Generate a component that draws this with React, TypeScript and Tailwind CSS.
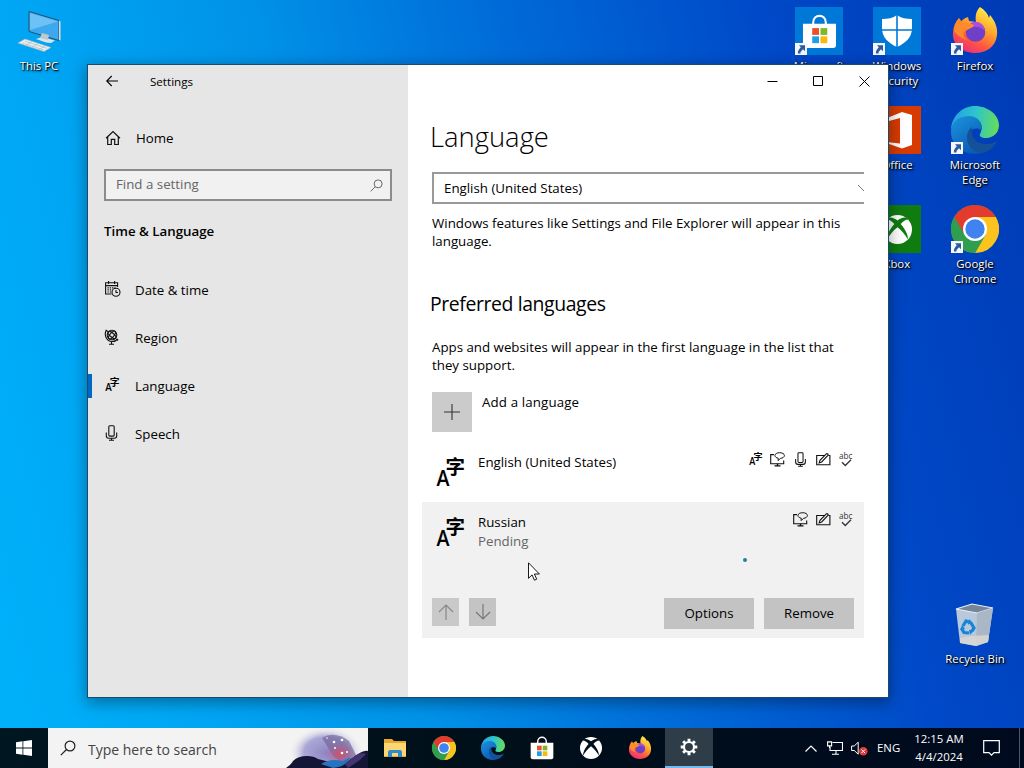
import React from "react";

type IconProps = { className?: string };

function LanguageGlyph({ className }: IconProps) {
  return (
    <svg viewBox="0 0 28 30" className={className} fill="currentColor" overflow="visible">
      <text x="0.5" y="28.5" fontSize="22" textLength="13" lengthAdjust="spacingAndGlyphs" fontFamily="Open Sans, sans-serif" fontWeight="600">
        A
      </text>
      <text x="9.5" y="17" fontSize="19.5" fontFamily="Noto Sans CJK SC, sans-serif" fontWeight="700">
        字
      </text>
    </svg>
  );
}

function DisplayIcon() {
  return (
    <svg viewBox="0 0 15 15" className="size-[15px]" fill="none" stroke="#111" strokeWidth="1.1">
      <path d="M4 2.6H.7v9.2h13V8.5" />
      <path d="M4.500 13.900h6M7.500 11.800v2" strokeWidth="1.4" />
      <path d="M8.2 8.600V6.200C6.200 5.800 4.900 4.700 4.900 3.500 4.900 1.900 7 .700 9.700.700s4.700 1.200 4.700 2.800-1.800 2.700-4 2.900z" strokeWidth="1" />
    </svg>
  );
}

function MicIcon({ className }: IconProps) {
  return (
    <svg viewBox="0 0 13 16" className={className} fill="none" stroke="#111" strokeWidth="1.1">
      <rect x="3.8" y=".7" width="5.4" height="10.4" rx="1" />
      <path d="M1.3 7.5v3.2c0 1.6 1 2.5 2.4 2.5h5.6c1.4 0 2.4-.9 2.4-2.5V7.5" />
      <path d="M6.5 13.2v2M4 15.3h5" />
    </svg>
  );
}

function PenIcon() {
  return (
    <svg viewBox="0 0 15 13" className="h-[13px] w-[15px]" fill="none" stroke="#111" strokeWidth="1.1">
      <path d="M9 2.500H.7v9.300h13.200V2.500h-1.500" />
      <path d="M3.2 9.900l.8-2.600L10.300.900c.9-.7 2.300.5 1.600 1.500L5.700 9z" />
    </svg>
  );
}

function SpellIcon() {
  return (
    <svg viewBox="0 0 14 16" className="h-4 w-3.5" fill="none" stroke="#333" overflow="visible">
      <text x="0" y="7.5" fontSize="8.5" textLength="13.5" lengthAdjust="spacingAndGlyphs" fill="#333" stroke="none" fontFamily="Open Sans, sans-serif">
        abc
      </text>
      <path d="M3 11.2l3.3 3.3 5.7-5.7" strokeWidth="1.3" />
    </svg>
  );
}

function HomeIcon() {
  return (
    <svg viewBox="0 0 16 16" className="size-4" fill="none" stroke="#111" strokeWidth="1.2">
      <path d="M1 8.3L8 1.5l7 6.8M2.7 7v7.5h3.6V9.3h3.4v5.2h3.6V7" />
    </svg>
  );
}

function CalendarIcon() {
  return (
    <svg viewBox="0 0 16 16" className="ml-px size-4" fill="none" stroke="#111" strokeWidth="1.1">
      <path d="M6.500 13H.6V1.800h12V6M.6 4.600h12M3.600 0v3M9.600 0v3" />
      <path d="M2.500 6.800h8M2.500 8.900h4M2.500 11h4" strokeDasharray="1.3 1" strokeWidth="1.2" />
      <circle cx="11" cy="11.300" r="4" />
      <path d="M11 9v2.500h2" />
    </svg>
  );
}

function GlobeIcon() {
  return (
    <svg viewBox="0 0 16 16" className="size-4" fill="none" stroke="#111" strokeWidth="1.1">
      <circle cx="8" cy="6" r="4.8" />
      <ellipse cx="8" cy="6" rx="4.8" ry="2" transform="rotate(40 8 6)" />
      <ellipse cx="8" cy="6" rx="2" ry="4.8" transform="rotate(40 8 6)" />
      <path d="M2.4.8C-.3 5.8 2.3 12.3 8 12.5c2.5 0 4.6-1 6-2.5M2.2 1.4l1.8 1M12.3 10l1.8 1.4M7.5 12.5v2.7M5 15.3h5" />
    </svg>
  );
}

function SearchIcon({ className }: IconProps) {
  return (
    <svg viewBox="0 0 16 16" className={className} fill="none" stroke="currentColor" strokeWidth="1.2">
      <circle cx="10" cy="6" r="4.9" />
      <path d="M6.5 9.5L.8 15.2" />
    </svg>
  );
}

function ChromeLogo({ className }: IconProps) {
  return (
    <svg viewBox="0 0 48 48" className={className}>
      <circle cx="24" cy="24" r="24" fill="#2f9e4f" />
      <path d="M24 24L3.2 12A24 24 0 0 1 44.8 12z" fill="#e33b2e" />
      <path d="M24 12h20.8A24 24 0 0 1 24 48l10.4-18z" fill="#fcc31e" />
      <path d="M3.2 12L13.6 30 24 24V12z" fill="#e33b2e" />
      <path d="M3.2 12L13.6 30 34.4 30 24 48A24 24 0 0 1 3.2 12z" fill="#2f9e4f" />
      <circle cx="24" cy="24" r="12" fill="#fff" />
      <circle cx="24" cy="24" r="9.7" fill="#3f82f0" />
    </svg>
  );
}

function EdgeLogo({ className }: IconProps) {
  return (
    <svg viewBox="0 0 48 48" className={className}>
      <defs>
        <linearGradient id="edgeTop" x1="0" y1="0.4" x2="1" y2="0.5">
          <stop offset="0" stopColor="#259fe0" />
          <stop offset=".5" stopColor="#2dc5cc" />
          <stop offset="1" stopColor="#68dc58" />
        </linearGradient>
        <linearGradient id="edgeSide" x1="0" y1="0" x2=".6" y2="1">
          <stop offset="0" stopColor="#1b95df" />
          <stop offset="1" stopColor="#0c5cb4" />
        </linearGradient>
      </defs>
      <path d="M0 23C1 10 11 0 24 0s24 9 24 19c0 8-6 13-13 13-5 0-7-2-6-4 3-4 1-13-8-13C11 15 2 19 0 23z" fill="url(#edgeTop)" />
      <path d="M0 24C1 15 9 10 18 10c8 0 14 6 13 14-8-4-14 0-14 7 0 8 6 14 14 16C14 51-1 40 0 24z" fill="url(#edgeSide)" />
      <path d="M21 21c-9 6-6 25 10 26 6-1 11-5 14-10 1-1 0-2-1-1-10 5-26 1-23-15z" fill="#155199" />
    </svg>
  );
}

function FirefoxLogo({ className }: IconProps) {
  return (
    <svg viewBox="0 0 48 48" className={className}>
      <defs>
        <linearGradient id="foxBody" x1=".8" y1=".05" x2=".3" y2="1">
          <stop offset="0" stopColor="#fff04c" />
          <stop offset=".4" stopColor="#ffa52b" />
          <stop offset=".7" stopColor="#ff5a3e" />
          <stop offset="1" stopColor="#ee2b7c" />
        </linearGradient>
      </defs>
      <path d="M29 0c5 3 8 7 9 11l1-3c5 6 8 13 7 20-1 11-10 18-22 18C11 46 1 37 2 26c0-6 2-11 6-15l1 5c3-4 5-5 8-6l1 4 7 1c-1-6 0-11 4-15z" fill="url(#foxBody)" />
      <circle cx="24.500" cy="25" r="9.800" fill="#6f3fc8" />
      <path d="M20 16c5-3 13 0 14 8-3-4-8-5-12-4z" fill="#a94ee0" />
      <path d="M3 24c1-7 4-11 5-13l3 4 10 2c3 1 2 3-1 4l-6 3c-3 2-1 7 2 9-6-1-10-6-13-9z" fill="#ff8a2d" />
    </svg>
  );
}

function StoreBag({ className }: IconProps) {
  return (
    <svg viewBox="0 0 36 36" className={className}>
      <path d="M11.500 12V9c0-9.500 13-9.500 13 0v3" fill="none" stroke="#fff" strokeWidth="2.200" />
      <path d="M1 10h34v22a3 3 0 0 1-3 3H4a3 3 0 0 1-3-3z" fill="#fff" />
      <path d="M10.500 14.500h7v7h-7z" fill="#e8512b" />
      <path d="M19 14.500h7v7h-7z" fill="#7db828" />
      <path d="M10.500 23h7v7h-7z" fill="#1ba0e8" />
      <path d="M19 23h7v7h-7z" fill="#f9b710" />
    </svg>
  );
}

function XboxBall({ className, gap }: IconProps & { gap: string }) {
  return (
    <svg viewBox="0 0 32 32" className={className}>
      <circle cx="16" cy="16" r="16" fill="#fff" />
      <path d="M6 3c4-1 7 1 10 3 3-2 6-4 10-3l2 2c-3 0-6 2-8.500 5C24 15 28 22 27.500 27c-3-5-7-10-11.500-13.500C11.500 17 7.500 22 4.500 27 4 22 8 15 12.500 10 10 7 7 5 4 5z" fill={gap} />
    </svg>
  );
}

function ThisPcIcon() {
  return (
    <svg viewBox="0 0 48 48" className="size-12">
      <path d="M14 4.500l30 9v20l-30-9z" fill="#3da8ee" stroke="#24506f" />
      <path d="M15 6l28 8.500L15 23z" fill="#6cc2f5" />
      <path d="M44 13.500l1.500 1v19l-1.500-.5z" fill="#d5dde0" />
      <path d="M21 32l6-2 13 3.500-4 2.500-5-.5z" fill="#dde4e8" />
      <path d="M27 26l7 2-1 5-8-2z" fill="#bcc9cf" />
      <path d="M3 36l7-4 26 8.500L29 44.500z" fill="#e9eef0" stroke="#a6b6be" strokeWidth=".6" />
      <path d="M7 36l22 7M10 34.300l22 7M10 39l7-4.500M16 41l7-4.500M23 43l7-4" stroke="#aebcc4" strokeWidth=".7" />
    </svg>
  );
}

function StoreTile() {
  return (
    <div className="flex size-12 items-center justify-center bg-[#0078d7]">
      <StoreBag className="size-[35px]" />
    </div>
  );
}

function SecurityTile() {
  return (
    <div className="flex size-12 items-center justify-center bg-[#0078d7]">
      <svg viewBox="0 0 32 34" className="h-[34px] w-8">
        <path d="M16 1c4 3 9 4 15 4v9c0 9-6 15-15 19C7 29 1 23 1 14V5c6 0 11-1 15-4z" fill="#fff" />
        <path d="M16 0v34M0 16h32" stroke="#0078d7" strokeWidth="1.600" />
      </svg>
    </div>
  );
}

function OfficeTile() {
  return (
    <div className="size-12 bg-[#d83b01]">
      <svg viewBox="0 0 48 48" className="size-12">
        <path d="M9 14l20-8 10 3v30l-10 3.500-20-7 18 2V12l-11 3v16l-7 3z" fill="#fff" />
      </svg>
    </div>
  );
}

function XboxTile() {
  return (
    <div className="flex size-12 items-center justify-center bg-[#107c10]">
      <XboxBall className="size-[29px]" gap="#107c10" />
    </div>
  );
}

function RecycleBinIcon() {
  return (
    <svg viewBox="0 0 48 48" className="size-12">
      <path d="M5 9l16-5 21 4-5 34-12 4-16-3z" fill="#c6d2df" opacity=".93" />
      <path d="M5 9l16-5 21 4-16 5z" fill="#75869a" stroke="#e6edf2" strokeWidth="1.200" />
      <path d="M26 13l16-5-5 34-12 4z" fill="#aab7c7" />
      <path d="M9 38l12-2 17-1-1 7-12 4-16-3z" fill="#dcd8d3" opacity=".8" />
      <g fill="none" stroke="#1685d8" strokeWidth="3.200">
        <path d="M12 26l3-5 4 1.500M20 23l3 5-2 3M18 33l-5-.5-2.500-4" />
      </g>
      <path d="M18 19l4 4-5 1.500zM23.500 30l-4.500 5-1-5zM9 30l2-5 3 4z" fill="#1685d8" />
    </svg>
  );
}

function ShortcutArrow() {
  return (
    <svg viewBox="0 0 12 12" className="absolute bottom-0 left-0 size-3">
      <path d="M0 0h12v12H0z" fill="#f4f6f8" />
      <path d="M4 2.200h6v6L8 6.300 5.500 9v1.500H3C2.500 8 4 6 5.800 4.200z" fill="#2c5aa0" />
    </svg>
  );
}

const desktopIcons = [
  { label: "This PC", icon: <ThisPcIcon />, place: "left-[1px] top-[7px]", shortcut: false },
  { label: "Microsoft Store", icon: <StoreTile />, place: "left-[781px] top-[7px]", shortcut: true },
  { label: "Windows Security", icon: <SecurityTile />, place: "left-[859px] top-[7px]", shortcut: true },
  { label: "Firefox", icon: <FirefoxLogo className="size-12" />, place: "left-[937px] top-[7px]", shortcut: true },
  { label: "Office", icon: <OfficeTile />, place: "left-[859px] top-[106px]", shortcut: true },
  { label: "Microsoft Edge", icon: <EdgeLogo className="size-12" />, place: "left-[937px] top-[106px]", shortcut: true },
  { label: "Xbox", icon: <XboxTile />, place: "left-[859px] top-[205px]", shortcut: true },
  { label: "Google Chrome", icon: <ChromeLogo className="size-12" />, place: "left-[937px] top-[205px]", shortcut: true },
  { label: "Recycle Bin", icon: <RecycleBinIcon />, place: "left-[937px] top-[600px]", shortcut: false },
];

function DesktopIcon({ label, icon, place, shortcut }: (typeof desktopIcons)[number]) {
  return (
    <div className={`absolute flex w-[76px] flex-col items-center ${place}`}>
      <div className="relative">
        {icon}
        {shortcut && <ShortcutArrow />}
      </div>
      <span className="mt-[3px] w-[66px] text-center text-[11.4px] leading-[15px] text-white [text-shadow:1px_1px_1px_#000,1px_1px_3px_#000]">
        {label}
      </span>
    </div>
  );
}

const navItems = [
  { label: "Date & time", icon: <CalendarIcon /> },
  { label: "Region", icon: <GlobeIcon /> },
  { label: "Language", icon: <LanguageGlyph className="mb-0.5 ml-px h-[15px] w-[14px]" />, active: true },
  { label: "Speech", icon: <MicIcon className="ml-px h-4 w-[13px]" /> },
];

function Sidebar() {
  return (
    <aside className="flex w-80 flex-col bg-[#e6e6e6]">
      <header className="flex h-8 items-center pl-[18px]">
        <svg viewBox="0 0 12 12" className="size-3" fill="none" stroke="#000" strokeWidth="1.100">
          <path d="M12 6H.7M5.700 1L.7 6l5 5" />
        </svg>
        <span className="ml-8 pt-0.5 text-[11.6px]">Settings</span>
      </header>
      <div className="mt-[17px] flex h-12 items-center pl-[17px]">
        <HomeIcon />
        <span className="ml-[15px] pt-0.5">Home</span>
      </div>
      <div className="mx-4 mt-[7px] flex h-8 items-center justify-between border-2 border-[#8b8b8b] bg-[#f1f1f1] pr-[7px] pl-2.5 text-[#666]">
        <span>Find a setting</span>
        <SearchIcon className="size-[13px]" />
      </div>
      <h2 className="mt-5 ml-4 leading-5 font-semibold">Time &amp; Language</h2>
      <nav className="mt-[25px]">
        {navItems.map((item) => (
          <div key={item.label} className="flex h-12 items-center">
            <span className={item.active ? "h-6 w-1 bg-[#0067c4]" : "h-6 w-1"} />
            <span className="ml-3 flex w-[31px] items-center pb-0.5">{item.icon}</span>
            <span className="pt-0.5">{item.label}</span>
          </div>
        ))}
      </nav>
    </aside>
  );
}

function CaptionButtons() {
  return (
    <div className="-mr-6 flex h-8 justify-end pr-px">
      {["M.5 5.500h10", "M.5.5h9v9H.5z", "M.5.5l10 10M10.500.5l-10 10"].map((d) => (
        <button key={d} className="flex w-[46px] items-center justify-center">
          <svg viewBox="0 0 11 11" className="size-[11px]" fill="none" stroke="#000">
            <path d={d} />
          </svg>
        </button>
      ))}
    </div>
  );
}

function Main() {
  return (
    <main className="flex w-[480px] flex-col bg-white px-6">
      <CaptionButtons />
      <h1 className="mt-5 -ml-0.5 text-[27.4px] leading-10 font-light">Language</h1>
      <div className="mt-[15px] flex h-8 items-center justify-between overflow-hidden border-2 border-r-0 border-[#999] pl-2.5">
        <span className="pt-0.5">English (United States)</span>
        <svg viewBox="0 0 6 8" className="h-2 w-1.5" fill="none" stroke="#777">
          <path d="M0 1l6 6" />
        </svg>
      </div>
      <p className="mt-2.5 leading-[18px]">
        Windows features like Settings and File Explorer will appear in this language.
      </p>
      <h2 className="mt-10 -ml-0.5 text-[19.4px] leading-7 tracking-[-0.02em]">Preferred languages</h2>
      <p className="mt-5 leading-[18px]">
        Apps and websites will appear in the first language in the list that they support.
      </p>
      <div className="mt-[18px] flex h-10 gap-2.5">
        <button className="flex size-10 items-center justify-center bg-[#cbcbcb]">
          <svg viewBox="0 0 16 16" className="size-4" stroke="#333" strokeWidth="1.100">
            <path d="M0 8h16M8 0v16" />
          </svg>
        </button>
        <span className="leading-5 tracking-[0.01em]">Add a language</span>
      </div>

      <div className="mt-2.5 flex h-[60px] pt-2.5 pr-[11px] pl-1">
        <LanguageGlyph className="mt-[5px] h-[30px] w-7" />
        <span className="ml-3.5 flex-1 leading-5">English (United States)</span>
        <div className="-mt-px flex h-4 items-center gap-2">
          <LanguageGlyph className="h-3.5 w-[13px]" />
          <DisplayIcon />
          <MicIcon className="h-[15px] w-[15px]" />
          <PenIcon />
          <SpellIcon />
        </div>
      </div>

      <div className="-ml-2.5 flex h-[136px] flex-col bg-[#f1f1f1] pr-2.5 pb-[9px] pl-2.5">
        <div className="flex pt-2.5 pr-px pl-1">
          <LanguageGlyph className="mt-[5px] h-[30px] w-7" />
          <div className="ml-3.5 flex-1">
            <p className="leading-5">Russian</p>
            <p className="leading-[18px] text-[#666]">Pending</p>
          </div>
          <div className="-mt-px flex h-4 items-center gap-2">
            <DisplayIcon />
            <PenIcon />
            <SpellIcon />
          </div>
        </div>
        <div className="mt-auto flex items-start">
          <button className="flex h-7 w-[27px] items-center justify-center bg-[#c9c9c9]">
            <svg viewBox="0 0 16 16" className="size-4" fill="none" stroke="#888" strokeWidth="1.200">
              <path d="M8 16V1M1 8l7-7 7 7" />
            </svg>
          </button>
          <button className="ml-2.5 flex h-7 w-[27px] items-center justify-center bg-[#c4c4c4]">
            <svg viewBox="0 0 16 16" className="size-4" fill="none" stroke="#777" strokeWidth="1.200">
              <path d="M8 0v15M1 8l7 7 7-7" />
            </svg>
          </button>
          <button className="ml-auto h-[31px] w-[90px] bg-[#c3c3c3] pt-px">Options</button>
          <button className="ml-2.5 h-[31px] w-[90px] bg-[#c3c3c3] pt-px">Remove</button>
        </div>
      </div>
    </main>
  );
}

function SearchArt() {
  return (
    <svg viewBox="0 0 82 40" className="h-10 w-[82px]">
      <defs>
        <radialGradient id="artGlow">
          <stop offset="0" stopColor="#8f86c4" />
          <stop offset=".6" stopColor="#aaa8d6" />
          <stop offset="1" stopColor="#f2f2f2" stopOpacity="0" />
        </radialGradient>
        <radialGradient id="artRed">
          <stop offset="0" stopColor="#d84e63" />
          <stop offset="1" stopColor="#9a6ba5" stopOpacity="0" />
        </radialGradient>
      </defs>
      <ellipse cx="40" cy="25" rx="37" ry="27" fill="url(#artGlow)" />
      <path d="M36 10q12-8 27 3l8 16q-15 11-25-3z" fill="#6a5d92" opacity=".6" />
      <ellipse cx="54" cy="26" rx="16" ry="13" fill="url(#artRed)" />
      <g fill="#fff">
        <circle cx="48" cy="14" r="1.300" />
        <circle cx="56" cy="12" r="1.300" />
        <circle cx="49" cy="20" r="1" />
        <circle cx="56" cy="25" r="1.300" />
        <circle cx="61" cy="24" r="1" />
        <circle cx="41" cy="10" r=".8" />
      </g>
      <path d="M0 40q5-3 7-7 5-5 14-5 7 0 11 3l12 3 18-1 10-7q7-4 10-3v17z" fill="#151536" />
      <path d="M35 36q9-6 22-3l8-4q-5 10-18 11z" fill="#2873bd" />
      <path d="M59 36l11-9q6-3 10-1l-6 6-12 8z" fill="#443572" />
    </svg>
  );
}

function ExplorerIcon() {
  return (
    <svg viewBox="0 0 22 18" className="h-[18px] w-[22px]">
      <path d="M0 0h8l2 2h12v16H0z" fill="#e7a82e" />
      <path d="M0 4h22v13H0z" fill="#fbd672" />
      <path d="M4 18v-5c0-1 1-2 2-2h10c1 0 2 1 2 2v5h-4v-4H8v4z" fill="#2f8bc9" />
    </svg>
  );
}

function GearIcon() {
  return (
    <svg viewBox="0 0 20 20" className="size-[18px]" fill="none" stroke="#fff">
      <circle cx="10" cy="10" r="5.600" strokeWidth="2.400" />
      <g strokeWidth="3.200">
        <path d="M10 .8v3.500M10 15.700v3.500M.8 10h3.500M15.700 10h3.500M3.500 3.500L6 6M14 14l2.500 2.500M3.500 16.500L6 14M14 6l2.500-2.500" />
      </g>
    </svg>
  );
}

const pinned = [
  { name: "explorer", icon: <ExplorerIcon /> },
  { name: "chrome", icon: <ChromeLogo className="size-6" /> },
  { name: "edge", icon: <EdgeLogo className="size-6" /> },
  { name: "store", icon: <StoreBag className="size-6" /> },
  { name: "xbox", icon: <XboxBall className="size-[22px]" gap="#000f1a" /> },
  { name: "firefox", icon: <FirefoxLogo className="size-6" /> },
];

function Taskbar() {
  return (
    <footer className="flex h-10 bg-linear-to-r from-[#001620] via-[#000f1a] to-[#000a1e] text-white">
      <button className="flex w-12 items-center justify-center">
        <svg viewBox="0 0 16 16" className="size-4" fill="#fff">
          <path d="M0 2.200L6.500 1.300v6.300H0zM7.300 1.200L16 0v7.600H7.300zM0 8.400h6.500v6.300L0 13.800zM7.300 8.400H16V16l-8.700-1.200z" />
        </svg>
      </button>
      <div className="flex w-80 items-center bg-[#f3f3f3] pl-3 text-[#444]">
        <SearchIcon className="size-4 text-[#222]" />
        <span className="ml-3 flex-1 pt-0.5 text-[14px]">Type here to search</span>
        <SearchArt />
      </div>
      <div className="ml-[3px] flex gap-px">
        {pinned.map((app) => (
          <button key={app.name} className="flex w-12 items-center justify-center">
            {app.icon}
          </button>
        ))}
        <button className="flex w-12 items-center justify-center border-b-2 border-[#76b9ed] bg-[#2f3d49]">
          <GearIcon />
        </button>
      </div>
      <div className="ml-auto flex items-center">
        <svg viewBox="0 0 12 7" className="h-[7px] w-3" fill="none" stroke="#fff" strokeWidth="1.200">
          <path d="M.5 6.500L6 1l5.500 5.500" />
        </svg>
        <svg viewBox="0 0 16 14" className="ml-2.5 h-3.5 w-4" fill="none" stroke="#fff" strokeWidth="1.100">
          <path d="M5.500 1.500h10v8H3V6M9 9.500v3.500M5 13.200h7" />
          <path d="M.6.900h4v4h-4zM2.600 5v2" />
        </svg>
        <svg viewBox="0 0 17 15" className="ml-2 h-[15px] w-[17px]" fill="none">
          <path d="M.6 5h2.600l4-3.800v12L3.200 9.500H.6z" stroke="#fff" />
          <circle cx="12.300" cy="10.300" r="4.300" fill="#dc3b3b" />
          <path d="M10.500 8.500l3.600 3.600M14.100 8.500l-3.600 3.600" stroke="#fff" />
        </svg>
        <span className="ml-[9px] w-6 text-[11.400px]">ENG</span>
        <div className="ml-[11px] w-[54px] text-center text-[11.400px] leading-[18px] whitespace-nowrap">
          <div>12:15 AM</div>
          <div>4/4/2024</div>
        </div>
        <svg viewBox="0 0 17 16" className="ml-[17px] h-4 w-[17px]" fill="none" stroke="#fff" strokeWidth="1.200">
          <path d="M.7.700h15.600v12H11l-2.500 2.500L6 12.700H.7z" />
        </svg>
        <span className="mr-1 ml-[19px] h-10 w-px bg-[#4c5666]" />
      </div>
    </footer>
  );
}

export default function App() {
  return (
    <div className="relative flex h-[768px] w-[1024px] flex-col overflow-hidden bg-[linear-gradient(76deg,#00b2fa_0%,#00a5f3_18%,#0092e8_36%,#006cd8_56%,#0049c8_78%,#003ab4_100%)] font-['Open_Sans','Noto_Sans',sans-serif] text-[13.3px] text-black">
      <div className="flex-1">
        {desktopIcons.map((item) => (
          <DesktopIcon key={item.label} {...item} />
        ))}
        <div className="absolute top-[65px] left-[88px] flex h-[632px] w-[800px] shadow-[0_0_0_1px_#1b4a6a,0_4px_14px_2px_rgba(0,0,0,0.35)]">
          <Sidebar />
          <Main />
        </div>
        {/* progress dot of the pending language */}
        <span className="absolute top-[558px] left-[743px] size-1 rounded-full bg-[#1c86a0]" />
        <svg viewBox="0 0 12 19" className="absolute top-[562px] left-[528px] h-[19px] w-3" fill="#fff" stroke="#000" strokeWidth=".9">
          <path d="M.5.800v15.500l3.600-3.400 2.300 5.300 2.300-1-2.300-5.200h5z" />
        </svg>
      </div>
      <Taskbar />
    </div>
  );
}
